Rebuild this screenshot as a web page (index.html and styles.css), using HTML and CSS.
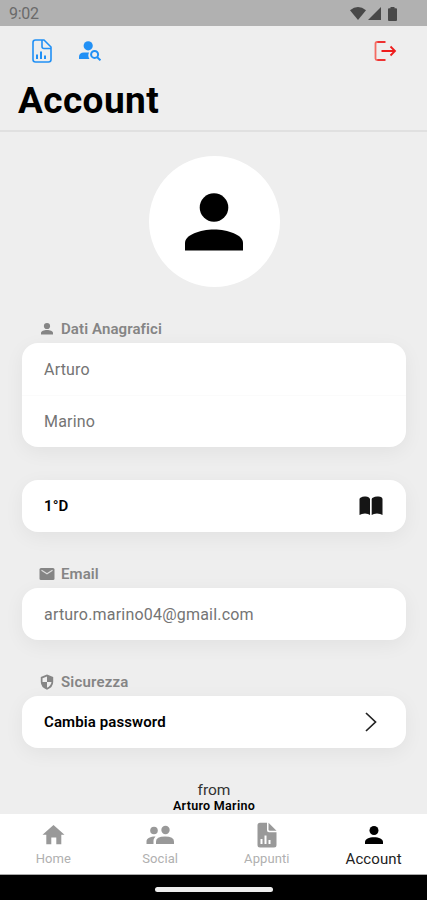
FILE: index.html
```html
<!DOCTYPE html>
<html lang="it">
<head>
    <meta charset="UTF-8">
    <meta name="viewport" content="width=device-width, initial-scale=1.0">
    <title>Account</title>
    <link rel="stylesheet" href="styles.css">
</head>
<body>
    <div class="status-bar">
        <span class="time">9:02</span>
        <div class="status-icons">
            <svg width="16" height="13" viewBox="0 0 16 13"><path d="M0 3.200Q8-3 16 3.200L8 13z"/></svg>
            <svg width="13" height="13" viewBox="0 0 13 13"><path d="M13 0v13H0z"/></svg>
            <svg class="battery" width="9" height="14" viewBox="0 0 9 14"><path d="M2.500 1.300V0h4v1.300H8q1 0 1 1V13q0 1-1 1H1q-1 0-1-1V2.300q0-1 1-1z"/></svg>
        </div>
    </div>

    <header class="header">
        <div class="toolbar">
            <svg class="report-btn" width="20" height="24" viewBox="0 0 20 24" fill="none" stroke="#2190f5" stroke-width="1.600">
                <path d="M3.500 1H12l7 7v12.500q0 2.500-2.500 2.500h-13Q1 23 1 20.500v-17Q1 1 3.500 1z"/>
                <path d="M10 1v6.500q0 2 2 2h7"/>
                <path d="M5 20v-4.500M9 20v-7.500M13 20v-3.500" stroke-width="2"/>
            </svg>
            <svg class="search-btn" width="22" height="20" viewBox="0 0 22 20" fill="#2190f5">
                <circle cx="9.200" cy="4.800" r="4.600"/>
                <path d="M0 18v-2.300q0-4 5-4.200h5q-1.600 3.400.5 6.500z"/>
                <circle cx="15.600" cy="13.400" r="3.500" fill="none" stroke="#2190f5" stroke-width="2"/>
                <path d="M18 16l3.500 3.300" stroke="#2190f5" stroke-width="2"/>
            </svg>
            <svg class="logout-btn" width="23" height="20" viewBox="0 0 23 20" fill="none" stroke="#ee1c1c" stroke-width="1.800">
                <path d="M11.500 1H3"/>
                <path d="M11.500 19H3"/>
                <path d="M3.500 1H3Q1.500 1 1.500 2.500v15Q1.500 19 3 19h.5" stroke="#f36b62"/>
                <path d="M7.500 10h14M16.500 5.500L21 10l-4.500 4.500"/>
            </svg>
        </div>
        <h1 class="title">Account</h1>
    </header>

    <main class="content">
        <div class="avatar">
            <svg width="58" height="58" viewBox="0 0 58 58"><circle cx="29" cy="14.500" r="14.300"/><path d="M0 57.500v-7.500C0 42 15 36.500 29 36.500S58 42 58 50v7.500z"/></svg>
        </div>

        <section class="group group-personal">
            <h2 class="label">
                <svg width="16" height="16" viewBox="0 0 16 16"><circle cx="8" cy="5" r="3.100"/><path d="M2 13.500V12c0-2 3-3 6-3s6 1 6 3v1.500z"/></svg>
                <span>Dati Anagrafici</span>
            </h2>
            <div class="card">
                <div class="row">Arturo</div>
                <div class="row">Marino</div>
            </div>
        </section>

        <section class="group group-class">
            <div class="card">
                <div class="row row-action">
                    <span class="class-name">1°D</span>
                    <svg class="book" width="24" height="20" viewBox="0 0 24 20"><path d="M.5 19V3Q1 1 5.500.5T11 3v16q-1.500-1.500-5-1.500T.5 19zM12.700 19V3q.5-2 5.500-2.500T23.500 3v16q-2-1.500-5.500-1.500t-5.300 1.500z"/></svg>
                </div>
            </div>
        </section>

        <section class="group group-email">
            <h2 class="label">
                <svg width="16" height="16" viewBox="0 0 16 16"><path d="M2 2h12q1.500 0 1.500 1.500v9q0 1.500-1.500 1.500H2Q.5 14 .5 12.500v-9Q.5 2 2 2z"/><path d="M2.500 4.300L8 7.800l5.500-3.500" fill="none" stroke="#ddd" stroke-width="1.200"/></svg>
                <span>Email</span>
            </h2>
            <div class="card">
                <div class="row email">arturo.marino04@gmail.com</div>
            </div>
        </section>

        <section class="group group-security">
            <h2 class="label">
                <svg width="16" height="16" viewBox="0 0 16 16"><path d="M8 .5L14.200 3v5q0 5.200-6.200 7.700Q1.800 13.200 1.800 8V3z"/><path d="M8 2.400V8h4.500q-.5 3.800-4.500 5.700V8H3.500V4.200z" fill="#eee"/></svg>
                <span class="security-label">Sicurezza</span>
            </h2>
            <div class="card">
                <div class="row row-action">
                    <span>Cambia password</span>
                    <svg class="chevron" width="12" height="20" viewBox="0 0 12 20" fill="none" stroke="#222" stroke-width="1.700"><path d="M1 1l9.500 9L1 19"/></svg>
                </div>
            </div>
        </section>

        <footer class="credits">
            <div class="from">from</div>
            <div class="author">Arturo Marino</div>
        </footer>
    </main>

    <nav class="tab-bar">
        <div class="tab">
            <svg width="24" height="26" viewBox="0 0 24 26"><path d="M12.500 3L23.500 12.800h-3.200v9.500h-5V15.500h-5v6.800h-5v-9.500H1.500z"/></svg>
            <span>Home</span>
        </div>
        <div class="tab">
            <svg width="28" height="26" viewBox="0 0 28 26"><circle cx="8" cy="8.500" r="3.800"/><circle cx="19.500" cy="8" r="4.200"/><path d="M.5 22v-2.500c0-3.500 4-5 9-5q-1.800 1.800-2 4.500v3z"/><path d="M10 22v-2.500q0-5 9-5t9 5V22z"/></svg>
            <span>Social</span>
        </div>
        <div class="tab">
            <svg width="20" height="26" viewBox="0 0 20 26"><path d="M3 .8h7v7.500q0 2 2 2h7.500V23q0 2.500-2.500 2.500H3Q.5 25.500.5 23V3.300Q.5.8 3 .8z"/><path d="M11.500.8l8 8h-6.500q-1.500 0-1.500-1.500z"/><path d="M4.500 22v-5M8.500 22v-8.500M12.500 22v-4" stroke="#fff" stroke-width="2"/></svg>
            <span>Appunti</span>
        </div>
        <div class="tab active">
            <svg width="20" height="26" viewBox="0 0 20 26"><circle cx="10" cy="8.500" r="4.500"/><path d="M1 22v-2c0-3 4-4.800 9-4.800s9 1.800 9 4.800v2z"/></svg>
            <span>Account</span>
        </div>
    </nav>
    <div class="gesture-bar"><div class="handle"></div></div>
</body>
</html>
```
FILE: styles.css
```css
* { box-sizing: border-box; }
body {
    margin: 0;
    height: 900px;
    display: flex;
    flex-direction: column;
    overflow: hidden;
    background-color: #eee;
    color: #000;
    font-family: Roboto, sans-serif;
}
svg { display: block; flex: none; }

.status-bar {
    height: 26px;
    flex: none;
    padding: 1px 30px 0 9px;
    display: flex;
    align-items: center;
    justify-content: space-between;
    background-color: #b1b1b1;
    color: #6a6a6a;
}
.time {
    font-size: 16px;
    letter-spacing: -0.3px;
}
.status-icons {
    display: flex;
    align-items: center;
    gap: 2px;
    fill: #484848;
}
.battery { margin-left: 5px; }

.header {
    height: 106px;
    flex: none;
    border-bottom: 2px solid #e0e0e0;
}
.toolbar {
    height: 49px;
    padding: 0 30px 0 32px;
    display: flex;
    align-items: center;
}
.search-btn { margin-left: 27px; }
.logout-btn { margin-left: auto; }
.title {
    margin: 2px 0 0 18px;
    font-size: 37px;
    line-height: 48px;
    font-weight: 700;
    letter-spacing: 0.4px;
}

.content {
    flex: 1;
    min-height: 0;
    padding: 24px 21px 0 22px;
    overflow: hidden;
}
.avatar {
    width: 131px;
    height: 131px;
    margin: 0 auto;
    display: flex;
    align-items: center;
    justify-content: center;
    border-radius: 50%;
    background-color: #fff;
}
.label {
    height: 20px;
    margin: 0 0 4px;
    padding-left: 17px;
    display: flex;
    align-items: center;
    gap: 6px;
    color: #858585;
    fill: #858585;
    font-size: 15px;
    font-weight: 600;
    letter-spacing: 0.1px;
}
.security-label { letter-spacing: 0.2px; }
.group-personal { margin-top: 32px; }
.group-class { margin-top: 33px; }
.group-email { margin-top: 32px; }
.group-security { margin-top: 32px; }
.card {
    border-radius: 16px;
    background-color: #fff;
    box-shadow: 0 5px 20px rgba(0, 0, 0, 0.055);
}
.row {
    height: 52px;
    padding: 0 23px 0 22px;
    display: flex;
    align-items: center;
    color: #747474;
    font-size: 16px;
    letter-spacing: 0.2px;
}
.row + .row { border-top: 1px solid #fbfbfb; }
.row-action {
    justify-content: space-between;
    color: #000;
    font-size: 15px;
    font-weight: 600;
    letter-spacing: 0.1px;
}
.book { fill: #151515; }
.chevron { margin-right: 6px; }
.credits {
    margin-top: 34px;
    text-align: center;
}
.from {
    color: #333;
    font-size: 15.5px;
    line-height: 16px;
}
.author {
    font-size: 12.5px;
    line-height: 15px;
    font-weight: 600;
    letter-spacing: 0.3px;
}

.tab-bar {
    height: 61px;
    flex: none;
    display: grid;
    grid-template-columns: repeat(4, 1fr);
    background-color: #fff;
    border-bottom: 1px solid #aaa;
}
.tab {
    padding-top: 8px;
    display: flex;
    flex-direction: column;
    align-items: center;
    color: #b0b0b0;
    fill: #999;
    font-size: 13px;
    line-height: 20px;
    letter-spacing: 0.1px;
}
.tab span { margin-top: 1px; }
.tab.active {
    color: #222;
    fill: #000;
    font-size: 15px;
}
.gesture-bar {
    height: 25px;
    flex: none;
    padding-top: 12px;
    background-color: #000;
}
.handle {
    width: 118px;
    height: 5px;
    margin: 0 auto;
    border-radius: 3px;
    background-color: #eee;
}
```
